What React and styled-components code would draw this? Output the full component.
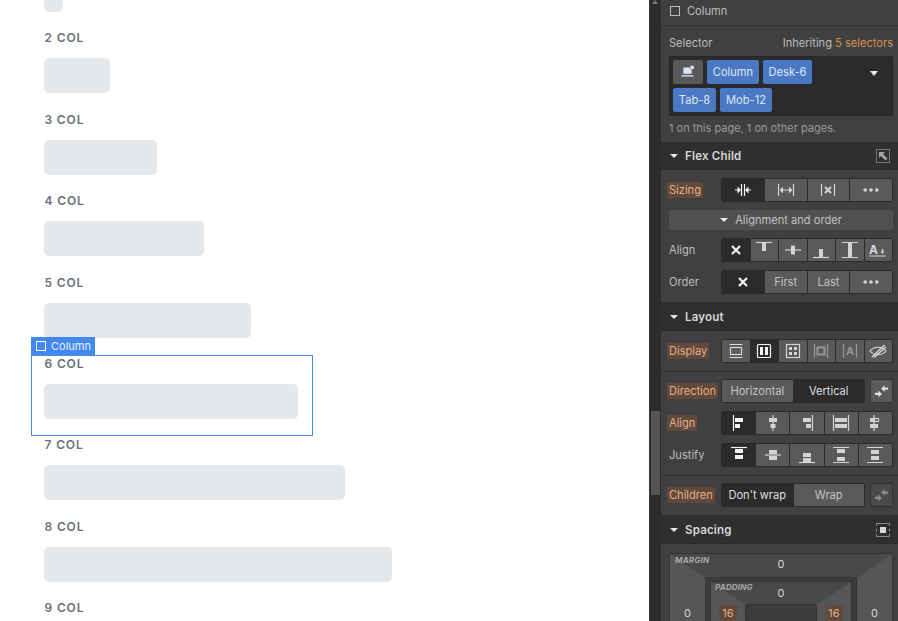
import React from "react";
import styled, { createGlobalStyle } from "styled-components";

const Global = createGlobalStyle`
  html, body { margin: 0; padding: 0; background: #fff; }
  body { font-family: Inter, "Liberation Sans", sans-serif; font-size: 12px; }
`;

const Page = styled.div`
  display: flex;
  width: 898px;
  height: 621px;
  overflow: hidden;
`;

const Canvas = styled.main`
  width: 649px;
  flex-shrink: 0;
  padding-left: 31px;
  box-sizing: border-box;
  background: #fff;
  overflow: hidden;
`;

const Columns = styled.div`
  display: grid;
  grid-auto-rows: 81.45px;
`;

const Stub = styled.div`
  width: 19px;
  height: 12px;
  margin: 0 0 17.2px 13px;
  border-radius: 0 0 5px 5px;
  background: #e5e8ea;
`;

const Col = styled.div`
  position: relative;
  box-sizing: border-box;
  padding: 0 15px 0 13px;
  box-shadow: ${(p) => (p.$selected ? "inset 0 0 0 1px #4a8be6" : "none")};
`;

const ColLabel = styled.div`
  height: 18px;
  line-height: 18px;
  font-size: 12px;
  font-weight: 600;
  letter-spacing: 0.85px;
  color: #6b7078;
  margin-bottom: 11px;
  padding-left: 0.5px;
`;

const ColBar = styled.div`
  height: 35px;
  border-radius: 5px;
  background: #e5e8ea;
`;

const SelectedTag = styled.div`
  position: absolute;
  left: 0;
  top: -18px;
  height: 18px;
  width: 64px;
  box-sizing: border-box;
  padding-left: 5px;
  display: flex;
  align-items: center;
  gap: 5px;
  background: #4388ef;
  color: #e8f0fd;
  font-size: 11px;
`;

const TagSquare = styled.span`
  width: 8px;
  height: 8px;
  border: 1px solid #fff;
`;

const Rail = styled.div`
  position: relative;
  width: 12px;
  flex-shrink: 0;
  background: #2c2c2c;
  border-left: 1px solid #3a3a3a;
  box-sizing: border-box;
`;

const RailArrow = styled.div`
  position: absolute;
  left: 2px;
  top: 0;
  border: 3px solid transparent;
  border-top: 0;
  border-bottom: 4px solid #777;
`;

const RailThumb = styled.div`
  position: absolute;
  left: 1px;
  right: 1px;
  top: 411px;
  height: 84px;
  background: #555;
`;

const Panel = styled.aside`
  flex: 1;
  background: #404040;
  color: #d9d9d9;
  font-size: 11.1px;
  overflow: hidden;
`;

const TitleBar = styled.div`
  height: 25px;
  box-sizing: content-box;
  padding: 0 0 0 9px;
  display: flex;
  align-items: flex-start;
  gap: 7px;
  border-bottom: 1px solid #333;
  color: #bdbdbd;
  line-height: 22px;
`;

const TitleSquare = styled.span`
  width: 8px;
  height: 8px;
  margin-top: 6px;
  border: 1px solid #bdbdbd;
`;

const SelectorBlock = styled.div`
  height: 116px;
  box-sizing: border-box;
  padding: 8px 5px 0 8px;
`;

const SelectorHead = styled.div`
  height: 18px;
  margin-bottom: 4px;
  display: flex;
  justify-content: space-between;
  align-items: center;
  color: #bdbdbd;
`;

const Accent = styled.span`
  color: #d98f57;
`;

const TagBox = styled.div`
  height: 60px;
  box-sizing: border-box;
  padding: 3px;
  background: #2b2b2b;
  border: 1px solid #262626;
  border-radius: 2px;
  display: flex;
  justify-content: space-between;
`;

const Tags = styled.div`
  display: flex;
  flex-wrap: wrap;
  align-content: flex-start;
  gap: 4px;
  width: 170px;
`;

const Tag = styled.div`
  height: 24px;
  box-sizing: border-box;
  display: flex;
  align-items: center;
  justify-content: center;
  white-space: nowrap;
  border-radius: 2px;
  background: ${(p) => (p.$plain ? "#5a5a5a" : "#4a78c2")};
  color: #dfe7f5;
  width: ${(p) => p.$w}px;
`;

const Caret = styled.span`
  width: 0;
  height: 0;
  margin: 11px 11px 0 0;
  border: 4.5px solid transparent;
  border-top: 5px solid #e6e6e6;
  border-bottom: 0;
`;

const Note = styled.div`
  margin-top: 5px;
  line-height: 14px;
  font-size: 11px;
  color: #9a9a9a;
  white-space: nowrap;
`;

const SectionHead = styled.div`
  height: 28px;
  box-sizing: border-box;
  padding: 0 1px 0 9px;
  display: flex;
  align-items: center;
  gap: 6px;
  background: #2f2f2f;
  border-bottom: 1px solid #2a2a2a;
  color: #d6d6d6;
  font-weight: 600;
  font-size: 11.5px;
  letter-spacing: 0.2px;
`;

const HeadCaret = styled.span`
  width: 0;
  height: 0;
  border: 4px solid transparent;
  border-top: 4px solid #e6e6e6;
  border-bottom: 0;
  margin-right: 1px;
`;

const HeadIcon = styled.span`
  margin-left: auto;
  display: flex;
`;

const SectionBody = styled.div`
  border-bottom: 1px solid #2f2f2f;
`;

const Block = styled.div`
  padding: 8px 5px 8px 8px;
  display: flex;
  flex-direction: column;
  gap: 8px;
  & + & {
    border-top: 1px solid #333;
    padding-top: 7px;
  }
`;

const Row = styled.div`
  height: 24px;
  display: flex;
  align-items: center;
`;

const Label = styled.div`
  width: 52px;
  flex-shrink: 0;
  color: #bdbdbd;
`;

const ModifiedLabel = styled.span`
  margin-left: -2px;
  padding: 1px 2px;
  border-radius: 2px;
  background: #5f4a3d;
  color: #e8ad84;
`;

const Segments = styled.div`
  flex: 1;
  height: 24px;
  display: flex;
  gap: 1px;
  box-sizing: border-box;
  background: #2b2b2b;
  border: 1px solid #2b2b2b;
  border-radius: 2px;
`;

const Seg = styled.div`
  flex: 1;
  display: flex;
  align-items: center;
  justify-content: center;
  min-width: 0;
  background: ${(p) => (p.$active ? "#2b2b2b" : "#5a5a5a")};
  color: ${(p) => (p.$active ? "#dedede" : "#c2c2c2")};
  & > svg {
    color: ${(p) => (p.$active ? "#f4f4f4" : "#d4d4d4")};
    opacity: ${(p) => (p.$dim ? 0.5 : 1)};
  }
`;

const SideButton = styled.div`
  width: 23px;
  height: 24px;
  margin-left: 5px;
  display: flex;
  align-items: center;
  justify-content: center;
  box-sizing: border-box;
  border-radius: 2px;
  border: 1px solid #333;
  background: ${(p) => (p.$faded ? "#4a4a4a" : "#5a5a5a")};
  color: ${(p) => (p.$faded ? "#8c8c8c" : "#dedede")};
`;

const Disclosure = styled.div`
  height: 20px;
  display: flex;
  align-items: center;
  justify-content: center;
  gap: 6px;
  border-radius: 2px;
  background: #505050;
  color: #c2c2c2;
`;

const SpacingWrap = styled.div`
  padding: 9px 5px 0 8px;
`;

const MarginBox = styled.div`
  position: relative;
  height: 124px;
  box-sizing: border-box;
  border: 1px solid #333;
  border-radius: 2px;
  background: #565656;
  font-size: 11px;
  color: #d6d6d6;
`;

const BoxShade = styled.svg`
  position: absolute;
  left: 0;
  top: 0;
`;

const BoxName = styled.span`
  position: absolute;
  left: ${(p) => p.$left}px;
  top: ${(p) => p.$top}px;
  font-size: 8px;
  font-weight: 700;
  font-style: italic;
  letter-spacing: 0.2px;
  color: #a8a8a8;
`;

const TopValue = styled.div`
  position: relative;
  height: ${(p) => p.$h}px;
  box-sizing: border-box;
  padding-bottom: ${(p) => p.$drop}px;
  display: flex;
  align-items: center;
  justify-content: center;
`;

const Middle = styled.div`
  position: relative;
  display: grid;
  grid-template-columns: ${(p) => p.$side}px 1fr ${(p) => p.$side}px;
`;

const SideValue = styled.div`
  height: 18px;
  margin-top: ${(p) => p.$top}px;
  display: flex;
  align-items: center;
  justify-content: center;
`;

const Modified = styled.span`
  padding: 1px 3px;
  border-radius: 2px;
  background: #5f4a3d;
  color: #e8ad84;
`;

const PaddingOuter = styled.div`
  height: 70px;
  padding: 3px 4px 0;
  background: #3c3c3c;
  border: 1px solid #333;
  border-radius: 2px;
`;

const PaddingBox = styled.div`
  position: relative;
  height: 100%;
  background: #565656;
  border: 1px solid #333;
`;

const ContentBox = styled.div`
  height: 16px;
  background: #3c3c3c;
  border: 1px solid #333;
  border-radius: 2px;
`;

const stroke = { stroke: "currentColor", strokeWidth: 1.2, fill: "none" };
const solid = { fill: "currentColor" };

const bars = (rects) => rects.map((r, i) => <rect key={i} x={r[0]} y={r[1]} width={r[2]} height={r[3]} {...solid} />);
const lines = (d) => <path d={d} {...stroke} />;

const icons = {
  shrink: <>{lines("M10.5 6v12M13.5 6v12M4 12h5M15 12h5")}<path d="M10 12l-3.500-3.500v7zM14 12l3.500-3.500v7z" {...solid} /></>,
  grow: <>{lines("M4.5 6v12M19.5 6v12M8 12h8")}<path d="M5.500 12l3.500-3.500v7zM18.500 12l-3.500-3.500v7z" {...solid} /></>,
  noshrink: <>{lines("M5.5 6v12M18.5 6v12")}<path d="M9 9l6 6M15 9l-6 6" stroke="currentColor" strokeWidth="2" /></>,
  dots: <><circle cx="6.2" cy="12" r="1.8" {...solid} /><circle cx="12" cy="12" r="1.8" {...solid} /><circle cx="17.8" cy="12" r="1.8" {...solid} /></>,
  cross: <path d="M8 8l8 8M16 8l-8 8" stroke="currentColor" strokeWidth="2.2" />,
  alignTop: <>{lines("M4 4.500h16")}{bars([[10, 5, 4, 8]])}</>,
  alignMid: <>{lines("M4 12h16")}{bars([[10, 7.500, 4, 9]])}</>,
  alignEnd: <>{lines("M4 19.500h16")}{bars([[10, 11, 4, 8]])}</>,
  alignStretch: <>{lines("M4 4.500h16M4 19.500h16")}{bars([[10, 5, 4, 14]])}</>,
  baseline: <><text x="3" y="15.500" fontSize="12" fontWeight="700" fill="currentColor" fontFamily="Inter, sans-serif">A</text>{lines("M3 18h17M16.500 11v3")}<path d="M14.500 13.500h4l-2 2.500z" {...solid} /></>,
  block: <>{lines("M5.500 5.500h13M5.500 18.500h13")}<rect x="6.500" y="8.500" width="11" height="7" {...stroke} /></>,
  flex: <><rect x="5.500" y="5.500" width="13" height="13" rx="1" {...stroke} />{bars([[8, 8, 3, 8], [13, 8, 3, 8]])}</>,
  grid: <><rect x="5.500" y="5.500" width="13" height="13" {...stroke} />{bars([[8, 8, 3, 3], [13, 8, 3, 3], [8, 13, 3, 3], [13, 13, 3, 3]])}</>,
  inlineBlock: <>{lines("M5.500 5v14M18.500 5v14")}<rect x="8.500" y="8.500" width="7" height="7" strokeWidth="2" stroke="currentColor" fill="none" /></>,
  inlineText: <>{lines("M5.500 5v14M18.500 5v14")}<text x="8" y="16" fontSize="11" fontWeight="700" fill="currentColor" fontFamily="Inter, sans-serif">A</text></>,
  hidden: <><path d="M4 12C8 7 16 7 20 12C16 17 8 17 4 12z" {...stroke} /><path d="M6 18L18.500 6M8 18.500L20 8" stroke="currentColor" strokeWidth="1.500" /></>,
  swap: <path d="M11.500 9L15.500 5.500v2.500h4v2.500h-4v2.500zM12.500 15.500L8.500 19v-2.500h-4V14h4v-2.500z" {...solid} />,
  startH: <>{lines("M6.500 4v16")}{bars([[8, 7, 8, 4], [8, 13, 5, 4]])}</>,
  centerH: <>{lines("M12 4v16")}{bars([[8, 7, 8, 4], [9.500, 13, 5, 4]])}</>,
  endH: <>{lines("M17.500 4v16")}{bars([[8, 7, 8, 4], [11, 13, 5, 4]])}</>,
  stretchH: <>{lines("M4.500 4v16M19.500 4v16")}{bars([[6, 7, 12, 4], [6, 13, 12, 4]])}</>,
  baseH: <>{lines("M11 4v16")}<rect x="11.500" y="7.500" width="4" height="3" {...stroke} />{bars([[7, 7, 4, 4], [7, 13, 8, 4]])}</>,
  startV: <>{lines("M4 4.500h16")}{bars([[8, 6, 8, 4], [8, 12, 8, 4]])}</>,
  centerV: <>{lines("M4 12h16")}{bars([[8, 7, 8, 4], [8, 13, 8, 4]])}</>,
  endV: <>{lines("M4 19.500h16")}{bars([[8, 10, 8, 4], [8, 15, 8, 4]])}</>,
  betweenV: <>{lines("M4 4.500h16M4 19.500h16")}{bars([[8, 6, 8, 4], [8, 14, 8, 4]])}</>,
  aroundV: <>{lines("M4 4.500h16M4 19.500h16")}{bars([[8, 7, 8, 4], [8, 13, 8, 4]])}</>,
  popout: <><rect x="3.500" y="5.500" width="13" height="13" stroke="#777" fill="none" /><path d="M6 8h6l-2 2 4.500 4.500-2 2L8 12l-2 2z" fill="#a6a6a6" /></>,
  spacing: <><path d="M3.500 8V5.500h13V8M3.500 16v2.500h13V16M3.500 10.500v3M16.500 10.500v3" stroke="#8c8c8c" fill="none" /><rect x="7" y="9" width="6" height="6" fill="#d8d8d8" /></>,
  selector: <><path d="M7 7h7v2h2v5H7zM5 15.500h13v1.500H5z" {...solid} /><circle cx="16.500" cy="7" r="2" {...solid} /></>,
};

const Icon = ({ name, size = 24 }) => (
  <svg width={size} height={size} viewBox="0 0 24 24">
    {icons[name]}
  </svg>
);

const ColRow = ({ n, selected }) => (
  <Col $selected={selected} style={{ width: 47 * n }}>
    {selected && (
      <SelectedTag>
        <TagSquare />
        Column
      </SelectedTag>
    )}
    <ColLabel>{n} COL</ColLabel>
    <ColBar />
  </Col>
);

const IconGroup = ({ items, active }) => (
  <Segments>
    {items.map((item, i) => (
      <Seg key={item} $active={i === active} $dim={item === "inlineBlock" || item === "inlineText"}>
        <Icon name={item} />
      </Seg>
    ))}
  </Segments>
);

const App = () => (
  <>
    <Global />
    <Page>
      <Canvas>
        <Stub />
        <Columns>
          {[2, 3, 4, 5, 6, 7, 8, 9].map((n) => (
            <ColRow key={n} n={n} selected={n === 6} />
          ))}
        </Columns>
      </Canvas>
      <Rail>
        <RailArrow />
        <RailThumb />
      </Rail>
      <Panel>
        <TitleBar>
          <TitleSquare />
          Column
        </TitleBar>
        <SelectorBlock>
          <SelectorHead>
            <span>Selector</span>
            <span>
              Inheriting <Accent>5 selectors</Accent>
            </span>
          </SelectorHead>
          <TagBox>
            <Tags>
              <Tag $plain $w={30}>
                <Icon name="selector" size={22} />
              </Tag>
              <Tag $w={52}>Column</Tag>
              <Tag $w={49}>Desk-6</Tag>
              <Tag $w={43}>Tab-8</Tag>
              <Tag $w={52}>Mob-12</Tag>
            </Tags>
            <Caret />
          </TagBox>
          <Note>1 on this page, 1 on other pages.</Note>
        </SelectorBlock>

        <SectionHead>
          <HeadCaret />
          Flex Child
          <HeadIcon>
            <Icon name="popout" />
          </HeadIcon>
        </SectionHead>
        <SectionBody>
          <Block>
            <Row>
              <Label>
                <ModifiedLabel>Sizing</ModifiedLabel>
              </Label>
              <IconGroup items={["shrink", "grow", "noshrink", "dots"]} active={0} />
            </Row>
            <Disclosure>
              <HeadCaret />
              Alignment and order
            </Disclosure>
            <Row>
              <Label>Align</Label>
              <IconGroup items={["cross", "alignTop", "alignMid", "alignEnd", "alignStretch", "baseline"]} active={0} />
            </Row>
            <Row>
              <Label>Order</Label>
              <Segments>
                <Seg $active>
                  <Icon name="cross" />
                </Seg>
                <Seg>First</Seg>
                <Seg>Last</Seg>
                <Seg>
                  <Icon name="dots" />
                </Seg>
              </Segments>
            </Row>
          </Block>
        </SectionBody>

        <SectionHead>
          <HeadCaret />
          Layout
        </SectionHead>
        <SectionBody>
          <Block>
            <Row>
              <Label>
                <ModifiedLabel>Display</ModifiedLabel>
              </Label>
              <IconGroup items={["block", "flex", "grid", "inlineBlock", "inlineText", "hidden"]} active={1} />
            </Row>
          </Block>
          <Block>
            <Row>
              <Label>
                <ModifiedLabel>Direction</ModifiedLabel>
              </Label>
              <Segments>
                <Seg>Horizontal</Seg>
                <Seg $active>Vertical</Seg>
              </Segments>
              <SideButton>
                <Icon name="swap" />
              </SideButton>
            </Row>
            <Row>
              <Label>
                <ModifiedLabel>Align</ModifiedLabel>
              </Label>
              <IconGroup items={["startH", "centerH", "endH", "stretchH", "baseH"]} active={0} />
            </Row>
            <Row>
              <Label>Justify</Label>
              <IconGroup items={["startV", "centerV", "endV", "betweenV", "aroundV"]} active={0} />
            </Row>
          </Block>
          <Block>
            <Row>
              <Label>
                <ModifiedLabel>Children</ModifiedLabel>
              </Label>
              <Segments>
                <Seg $active>Don't wrap</Seg>
                <Seg>Wrap</Seg>
              </Segments>
              <SideButton $faded>
                <Icon name="swap" />
              </SideButton>
            </Row>
          </Block>
        </SectionBody>

        <SectionHead>
          <HeadCaret />
          Spacing
          <HeadIcon>
            <Icon name="spacing" />
          </HeadIcon>
        </SectionHead>
        <SpacingWrap>
          <MarginBox>
            <BoxShade width="222" height="122">
              <polygon points="0,0 222,0 187,24 35,24" fill="#494949" />
            </BoxShade>
            <BoxName $left={5} $top={1}>MARGIN</BoxName>
            <TopValue $h={23} $drop={3}>0</TopValue>
            <Middle $side={35}>
              <SideValue $top={27}>0</SideValue>
              <PaddingOuter>
                <PaddingBox>
                  <BoxShade width="140" height="64">
                    <polygon points="0,0 140,0 106,22 34,22" fill="#494949" />
                  </BoxShade>
                  <BoxName $left={4} $top={0}>PADDING</BoxName>
                  <TopValue $h={22} $drop={0}>0</TopValue>
                  <Middle $side={34}>
                    <SideValue $top={0}>
                      <Modified>16</Modified>
                    </SideValue>
                    <ContentBox />
                    <SideValue $top={0}>
                      <Modified>16</Modified>
                    </SideValue>
                  </Middle>
                </PaddingBox>
              </PaddingOuter>
              <SideValue $top={27}>0</SideValue>
            </Middle>
          </MarginBox>
        </SpacingWrap>
      </Panel>
    </Page>
  </>
);

export default App;
